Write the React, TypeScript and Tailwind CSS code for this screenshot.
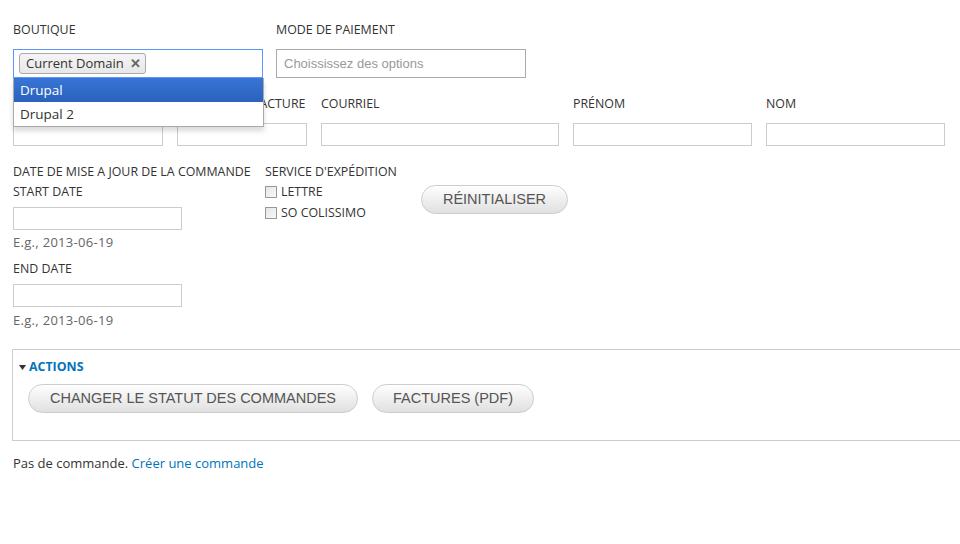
import React from "react";

const label = "text-[12.4px] leading-[16px] text-[#333] uppercase";
const input = "h-[23px] border border-[#ccc] bg-white";
const btn =
  "h-[29px] rounded-full border border-[#ccc] bg-gradient-to-b from-[#fefefe] to-[#e0e0e0] text-[14.5px] text-[#555] uppercase whitespace-nowrap font-['Liberation_Sans',Arial,sans-serif] shadow-[inset_0_1px_0_#fff]";

function Checkbox({ text }: { text: string }) {
  return (
    <div className="flex items-center gap-[4px] h-[21px]">
      <span className="w-[12px] h-[12px] border border-[#999] bg-gradient-to-br from-[#e6e6e6] to-[#f8f8f8] inline-block" />
      <span className={label}>{text}</span>
    </div>
  );
}

export default function App() {
  return (
    <div className="w-[960px] h-[544px] bg-white overflow-hidden font-['Open_Sans','Noto_Sans',sans-serif] text-[#333]">
      <div className="pl-[13px] pt-[22px]">
        {/* Row 1 */}
        <div className="flex gap-[13px] relative">
          <div className="w-[250px] relative">
            <div className={label + " h-[16px]"}>Boutique</div>
            <div className="mt-[11px] h-[29px] border border-[#5897fb] bg-white flex items-center px-[5px]">
              <span className="h-[21px] flex items-center gap-[6px] rounded-[3px] border border-[#aaa] bg-gradient-to-b from-[#f4f4f4] to-[#e8e8e8] pl-[6px] pr-[4px] text-[13px] text-[#333]">
                Current Domain
                <span className="text-[#666] text-[13px] font-bold leading-none">✕</span>
              </span>
            </div>
            <div className="absolute left-0 top-[56px] w-[251px] bg-white border border-[#aaa] border-t-0 shadow-[0_4px_5px_rgba(0,0,0,0.15)] z-10 text-[13.5px]">
              <div className="h-[24px] flex items-center px-[6px] text-white bg-gradient-to-b from-[#3875d7] to-[#2a62bc]">Drupal</div>
              <div className="h-[24px] flex items-center px-[6px] text-[#333]">Drupal 2</div>
            </div>
          </div>
          <div className="w-[250px]">
            <div className={label + " h-[16px]"}>Mode de paiement</div>
            <div className="mt-[11px] h-[29px] border border-[#aaa] bg-white flex items-center px-[7px] text-[13px] text-[#999] font-['Liberation_Sans',Arial,sans-serif]">
              Choississez des options
            </div>
          </div>
        </div>

        {/* Row 2 */}
        <div className="flex gap-[14px] mt-[18px]">
          <div className="w-[150px]">
            <div className="h-[16px]" />
            <div className={input + " mt-[11px]"} />
          </div>
          <div className="w-[130px]">
            <div className={label + " whitespace-nowrap"}>Numéro de facture</div>
            <div className={input + " mt-[11px]"} />
          </div>
          <div className="w-[238px]">
            <div className={label}>Courriel</div>
            <div className={input + " mt-[11px]"} />
          </div>
          <div className="w-[179px]">
            <div className={label}>Prénom</div>
            <div className={input + " mt-[11px]"} />
          </div>
          <div className="w-[179px]">
            <div className={label}>Nom</div>
            <div className={input + " mt-[11px]"} />
          </div>
        </div>

        {/* Row 3 */}
        <div className="flex mt-[18px]">
          <div className="w-[252px]">
            <div className={label}>Date de mise a jour de la commande</div>
            <div className={label + " mt-[4px]"}>Start date</div>
            <div className={input + " w-[169px] mt-[7px]"} />
            <div className="text-[13px] leading-[16px] text-[#666] mt-[4px] tracking-[0.3px]">E.g., 2013-06-19</div>
            <div className={label + " mt-[11px]"}>End date</div>
            <div className={input + " w-[169px] mt-[7px]"} />
            <div className="text-[13px] leading-[16px] text-[#666] mt-[5px] tracking-[0.3px]">E.g., 2013-06-19</div>
          </div>
          <div className="w-[156px]">
            <div className={label}>Service d'expédition</div>
            <div className="mt-[1px]">
              <Checkbox text="Lettre" />
              <Checkbox text="So Colissimo" />
            </div>
          </div>
          <div className="pt-[21px]">
            <button className={btn + " w-[147px]"}>Réinitialiser</button>
          </div>
        </div>
      </div>

      {/* Fieldset */}
      <div className="ml-[12px] mt-[21px] h-[92px] border border-[#ccc] border-r-0 pl-[6px] pt-[9px]">
        <div className="flex items-center gap-[3px] text-[12.4px] leading-[16px] font-bold text-[#0074bd] uppercase">
          <svg width="7" height="5" viewBox="0 0 7 5"><path d="M0 0h7L3.5 5z" fill="#333" /></svg>
          Actions
        </div>
        <div className="flex gap-[14px] ml-[9px] mt-[9px]">
          <button className={btn + " w-[330px]"}>Changer le statut des commandes</button>
          <button className={btn + " w-[162px]"}>Factures (PDF)</button>
        </div>
      </div>

      <div className="ml-[13px] mt-[14px] text-[13px] leading-[16px] text-[#333]">
        Pas de commande. <span className="text-[#0074bd]">Créer une commande</span>
      </div>
    </div>
  );
}
